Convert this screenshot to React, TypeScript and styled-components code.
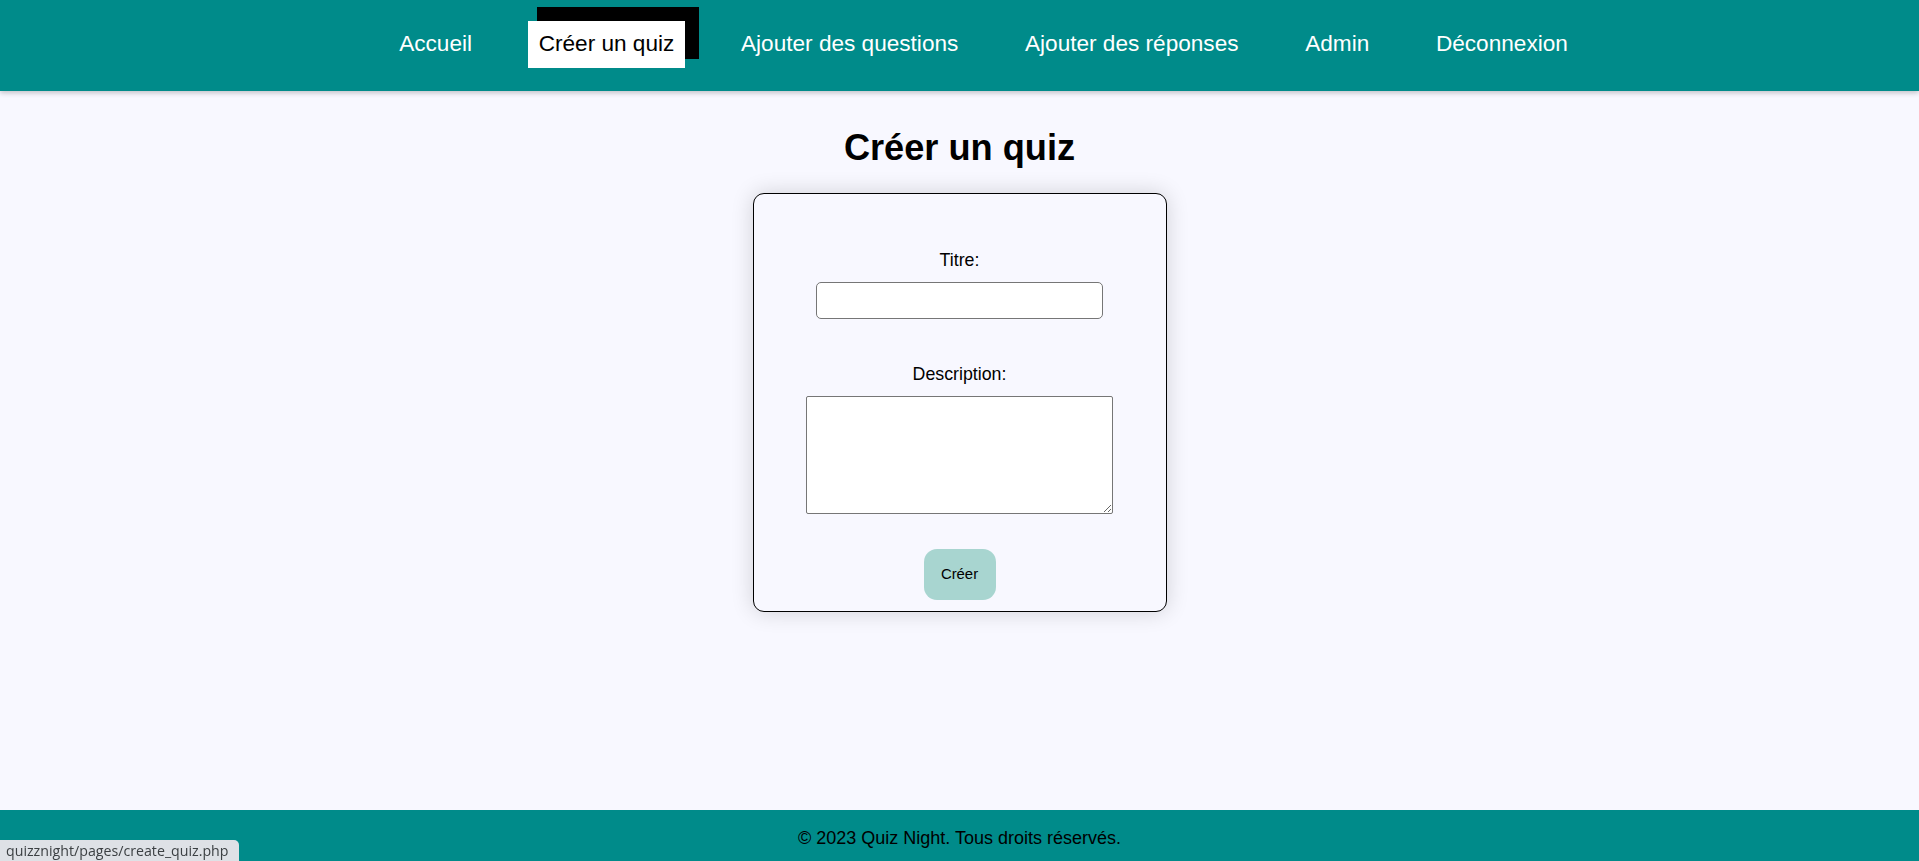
import React from "react";
import styled, { createGlobalStyle } from "styled-components";

const GlobalStyle = createGlobalStyle`
  html, body { margin: 0; padding: 0; }
  body {
    background: #f8f8ff;
    font-family: "Liberation Sans", Arial, sans-serif;
    color: #000;
  }
  * { box-sizing: border-box; }
`;

const Page = styled.div`
  min-height: 100vh;
  display: flex;
  flex-direction: column;
`;

const NavBar = styled.nav`
  height: 91px;
  background: #008b8a;
  box-shadow: 0 2px 5px rgba(0, 0, 0, 0.22);
  padding-bottom: 2px;
  display: flex;
  align-items: center;
  position: relative;
  z-index: 2;
`;

const NavList = styled.ul`
  list-style: none;
  margin: 0;
  padding: 0 0 0 48px;
  width: 100%;
  display: flex;
  justify-content: center;
  align-items: center;
  gap: 44.7px;
`;

const NavItem = styled.li`
  position: relative;
`;

const NavLink = styled.a<{ $active?: boolean }>`
  position: relative;
  display: block;
  padding: 11px;
  font-size: 22.6px;
  line-height: 24.7px;
  text-decoration: none;
  color: ${(p) => (p.$active ? "#000" : "#fff")};
  background: ${(p) => (p.$active ? "#fff" : "transparent")};
  white-space: nowrap;
  z-index: 1;
`;

const ActiveShade = styled.span`
  position: absolute;
  left: 9px;
  top: -14px;
  width: 162px;
  height: 52px;
  background: #000;
  z-index: 0;
`;

const Main = styled.main`
  flex: 1;
  display: flex;
  flex-direction: column;
  align-items: center;
  padding-top: 36.8px;
`;

const Title = styled.h1`
  margin: 0 0 25.6px;
  font-size: 36.2px;
  line-height: 40px;
  font-weight: bold;
`;

const Card = styled.form`
  width: 414px;
  border: 1px solid #000;
  border-radius: 11px;
  background: #f8f8ff;
  box-shadow: 0 0 22px rgba(0, 0, 0, 0.16);
  padding: 55.5px 0 11px;
  display: flex;
  flex-direction: column;
  align-items: center;
`;

const Label = styled.label<{ $gapTop?: number }>`
  font-size: 17.8px;
  line-height: 20px;
  margin-top: ${(p) => p.$gapTop ?? 0}px;
`;

const TextInput = styled.input`
  margin-top: 12.4px;
  width: 287.4px;
  height: 37.2px;
  border: 1px solid #767676;
  border-radius: 5px;
  background: #fff;
  font-size: 17.6px;
  padding: 2px 6px;
`;

const TextArea = styled.textarea`
  margin-top: 12.1px;
  width: 306.4px;
  height: 118px;
  border: 1px solid #767676;
  border-radius: 2px;
  background: #fff;
  font-family: "Liberation Mono", monospace;
  font-size: 14.6px;
  display: block;
`;

const SubmitButton = styled.button`
  margin-top: 34.7px;
  width: 72px;
  height: 51px;
  border: none;
  border-radius: 13px;
  background: #a8d5d0;
  color: #000;
  font-family: "Liberation Sans", Arial, sans-serif;
  font-size: 14.9px;
  padding: 0;
  cursor: pointer;
`;

const Footer = styled.footer`
  height: 51px;
  background: #008b8a;
  text-align: center;
  padding-top: 18.2px;
  font-size: 18px;
  line-height: 20px;
  color: #000;
`;

const StatusBubble = styled.div`
  position: fixed;
  left: 0;
  top: 840px;
  width: 239px;
  height: 24px;
  background: #dee1e6;
  border-top-right-radius: 5px;
  color: #3c4043;
  font-family: "Open Sans", "Noto Sans", sans-serif;
  font-size: 14.2px;
  line-height: 22px;
  padding-left: 6px;
  white-space: nowrap;
  z-index: 10;
`;

const links = [
  { label: "Accueil" },
  { label: "Créer un quiz", active: true },
  { label: "Ajouter des questions" },
  { label: "Ajouter des réponses" },
  { label: "Admin" },
  { label: "Déconnexion" },
];

export default function App() {
  return (
    <>
      <GlobalStyle />
      <Page>
        <NavBar>
          <NavList>
            {links.map((l) => (
              <NavItem key={l.label}>
                {l.active && <ActiveShade />}
                <NavLink href="#" $active={l.active}>
                  {l.label}
                </NavLink>
              </NavItem>
            ))}
          </NavList>
        </NavBar>
        <Main>
          <Title>Créer un quiz</Title>
          <Card onSubmit={(e) => e.preventDefault()}>
            <Label htmlFor="titre">Titre:</Label>
            <TextInput id="titre" type="text" />
            <Label htmlFor="description" $gapTop={44.7}>
              Description:
            </Label>
            <TextArea id="description" />
            <SubmitButton type="submit">Créer</SubmitButton>
          </Card>
        </Main>
        <Footer>© 2023 Quiz Night. Tous droits réservés.</Footer>
      </Page>
      <StatusBubble>quizznight/pages/create_quiz.php</StatusBubble>
    </>
  );
}
